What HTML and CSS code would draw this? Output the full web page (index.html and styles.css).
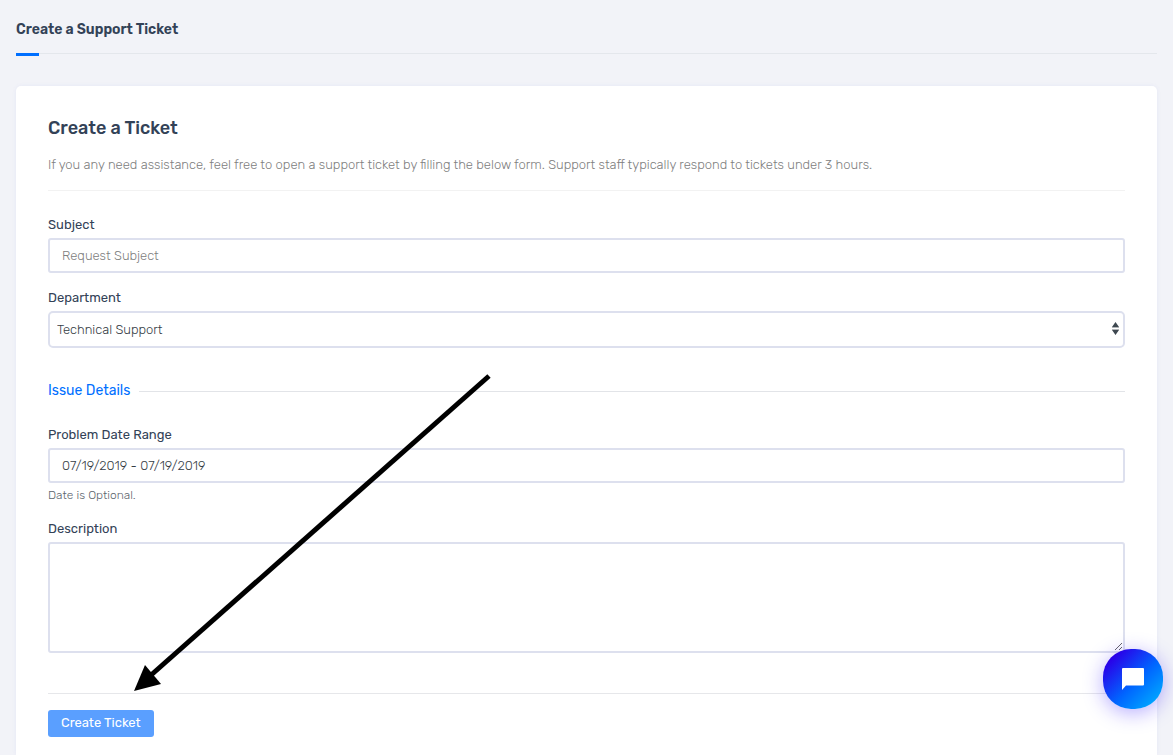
FILE: index.html
```html
<!DOCTYPE html>
<html lang="en">
<head>
  <meta charset="utf-8">
  <title>Create a Support Ticket</title>
  <meta name="viewport" content="width=device-width, initial-scale=1.0">
  <link rel="stylesheet" href="styles.css">
</head>
<body>
  <header class="page-header">
    <h1 class="page-title">Create a Support Ticket</h1>
  </header>

  <main class="card">
    <h2 class="card-title">Create a Ticket</h2>
    <p class="card-intro">If you any need assistance, feel free to open a support ticket by filling the below form. Support staff typically respond to tickets under 3 hours.</p>

    <form class="ticket-form">
      <div class="form-group">
        <label for="subject">Subject</label>
        <input class="form-control" type="text" id="subject" placeholder="Request Subject">
      </div>
      <div class="form-group">
        <label for="department">Department</label>
        <div class="select-wrap">
          <select class="form-control form-select" id="department">
            <option>Technical Support</option>
          </select>
          <svg class="select-arrows" viewBox="0 0 7 13" aria-hidden="true">
            <path d="M0 5L3.500 0L7 5zM0 8L3.500 13L7 8z"/>
            <path d="M0 5h7v1H0zM0 7h7v1H0z" opacity=".4"/>
          </svg>
        </div>
      </div>

      <h3 class="section-title">Issue Details</h3>

      <div class="form-group">
        <label for="dates">Problem Date Range</label>
        <input class="form-control" type="text" id="dates" value="07/19/2019 - 07/19/2019">
        <small class="form-help">Date is Optional.</small>
      </div>
      <div class="form-group">
        <label for="description">Description</label>
        <textarea class="form-control form-textarea" id="description"></textarea>
      </div>

      <div class="form-actions">
        <button class="btn" type="submit">Create Ticket</button>
      </div>
    </form>
  </main>

  <!-- pointer to the submit button -->
  <svg class="pointer" viewBox="0 0 358 320" aria-hidden="true">
    <path d="M355 3L16 303" stroke="#000" stroke-width="5"/>
    <path d="M0 318L11 292L27 311z"/>
  </svg>

  <button class="chat" type="button" aria-label="Open chat">
    <svg class="chat-icon" viewBox="0 0 22 22" aria-hidden="true">
      <path fill="#fff" d="M1 0h20q1 0 1 1v15.500q0 1-1 1H4L0 22V1q0-1 1-1z"/>
    </svg>
  </button>
</body>
</html>
```
FILE: styles.css
```css
* {
  box-sizing: border-box;
}
body {
  display: flex;
  flex-direction: column;
  min-height: 100vh;
  margin: 0;
  padding: 0 16px;
  background: #f2f3f8;
  color: #334257;
  font-family: Rubik, Roboto, sans-serif;
  font-size: 13px;
  line-height: 20px;
}
h1, h2, h3, p {
  margin: 0;
}

.page-header {
  position: relative;
  margin-bottom: 32px;
  padding: 20px 0 13px;
  border-bottom: 1px solid #e4e7ec;
}
.page-header::after {
  content: "";
  position: absolute;
  left: 0;
  top: 100%;
  width: 23px;
  height: 3px;
  background: #006fff;
}
.page-title {
  font-size: 14px;
  font-weight: 600;
  line-height: 20px;
}

.card {
  flex: 1;
  padding: 30px 32px 18px;
  background: #fff;
  border-radius: 5px 5px 0 0;
  box-shadow: 0 0 4px rgba(90, 100, 220, .08);
}
.card-title {
  font-size: 18px;
  font-weight: 500;
  line-height: 24px;
}
.card-intro {
  margin: 15px 0 24px;
  padding-bottom: 15px;
  border-bottom: 1px solid #f2f2f2;
  color: #808080;
  font-weight: 300;
}

.form-group {
  display: flex;
  flex-direction: column;
  margin-bottom: 15px;
}
.form-group label {
  margin-bottom: 3px;
}
.form-control {
  width: 100%;
  height: 35px;
  padding: 0 12px;
  border: 2px solid #dde0ee;
  border-radius: 3px;
  background: #fff;
  color: #363d45;
  font: inherit;
  font-weight: 300;
}
.form-control::placeholder {
  color: #808080;
}
.form-select {
  height: 37px;
  padding: 0 7px;
  border-radius: 5px;
  appearance: none;
}
.select-wrap {
  position: relative;
  display: flex;
}
.select-arrows {
  position: absolute;
  top: 11px;
  right: 6px;
  width: 7px;
  height: 13px;
  fill: #3e4850;
  pointer-events: none;
}
.form-textarea {
  height: 111px;
  padding: 8px 12px;
  resize: vertical;
}
.form-help {
  margin-top: 4px;
  color: #5c656d;
  font-size: 12px;
  font-weight: 300;
  line-height: 17px;
}

.section-title {
  display: flex;
  align-items: center;
  gap: 9px;
  margin: 33px 0 24px;
  color: #006fff;
  font-size: 14px;
  font-weight: 400;
  line-height: 20px;
}
.section-title::after {
  content: "";
  flex: 1;
  height: 1px;
  background: #e2e4e8;
}

.form-actions {
  margin-top: 40px;
  padding-top: 16px;
  border-top: 1px solid #e6e7ea;
}
.btn {
  display: block;
  padding: 3px 13px 4px;
  border: 0;
  border-radius: 3px;
  background: #5a9fff;
  color: #fff;
  font: inherit;
}

.pointer {
  position: absolute;
  left: 134px;
  top: 373px;
  width: 358px;
  height: 320px;
  pointer-events: none;
}

.chat {
  position: fixed;
  right: 10px;
  bottom: 46px;
  display: flex;
  align-items: center;
  justify-content: center;
  width: 60px;
  height: 60px;
  padding: 0;
  border: 0;
  border-radius: 28px;
  background: linear-gradient(135deg, #2a00e8 15%, #0065ff 55%, #00a8ff 90%);
  box-shadow: 0 4px 20px rgba(50, 20, 255, .35);
}
.chat-icon {
  width: 22px;
  height: 22px;
}
```
